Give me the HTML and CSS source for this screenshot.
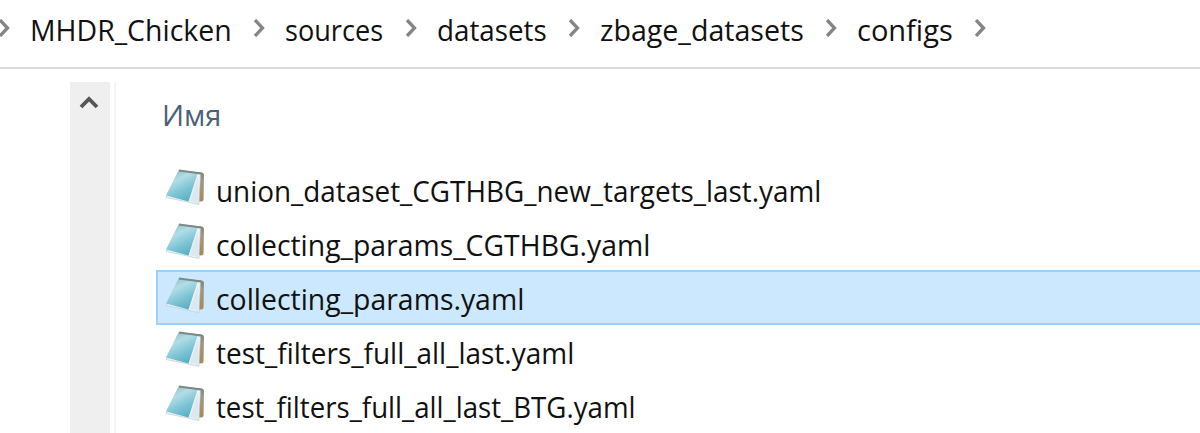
FILE: index.html
```html
<!DOCTYPE html>
<html lang="ru">
<head>
<meta charset="utf-8">
<title>configs</title>
<link rel="stylesheet" href="styles.css">
</head>
<body>
<svg class="defs" aria-hidden="true">
  <defs>
    <linearGradient id="cover" x1="0.2" y1="0" x2="0.7" y2="1">
      <stop offset="0" stop-color="#8fb9c4"/><stop offset="0.3" stop-color="#b2dde6"/>
      <stop offset="0.65" stop-color="#7cc4d5"/><stop offset="1" stop-color="#55adc3"/>
    </linearGradient>
    <linearGradient id="back" x1="0" y1="0" x2="0" y2="1">
      <stop offset="0" stop-color="#78827c"/><stop offset="0.35" stop-color="#a09784"/><stop offset="1" stop-color="#a58a58"/>
    </linearGradient>
    <symbol id="notepad" viewBox="0 0 42 38">
      <path d="M13 2.500 36 4.500Q38 5 38 7L37.500 32Q37 33.500 34 33.500L28 30Z" fill="url(#back)"/>
      <path d="M13 3 34.500 6 33 36.300Q28 36 22 34L0 29.500Z" fill="#edf3f6" stroke="#b4c3c6" stroke-width=".6"/>
      <path d="M32 9 33 35.500 24 33Z" fill="#dce8ef"/>
      <path d="M12.500 2.500 31.500 6 22.500 33.500 0 27.500Z" fill="url(#cover)"/>
      <path d="M13 2.600 35 5.500" stroke="#7c8987" stroke-width="2"/>
    </symbol>
  </defs>
</svg>
<main class="window">
  <nav class="crumbs">
    <svg class="chev lead" viewBox="0 0 12 18"><path d="M2 1 9.500 9 2 17"/></svg>
    <span class="crumb c1"><span>MHDR_Chicken</span></span>
    <svg class="chev" viewBox="0 0 12 18"><path d="M2 1 9.500 9 2 17"/></svg>
    <span class="crumb c2"><span>sources</span></span>
    <svg class="chev" viewBox="0 0 12 18"><path d="M2 1 9.500 9 2 17"/></svg>
    <span class="crumb c3"><span>datasets</span></span>
    <svg class="chev" viewBox="0 0 12 18"><path d="M2 1 9.500 9 2 17"/></svg>
    <span class="crumb c4"><span>zbage_datasets</span></span>
    <svg class="chev" viewBox="0 0 12 18"><path d="M2 1 9.500 9 2 17"/></svg>
    <span class="crumb c5"><span>configs</span></span>
    <svg class="chev" viewBox="0 0 12 18"><path d="M2 1 9.500 9 2 17"/></svg>
  </nav>
  <div class="body">
    <div class="scrollbar"><svg class="up" viewBox="0 0 20 14"><path d="M2 12 10 4 18 12"/></svg></div>
    <section class="files">
      <header class="heading"><span>Имя</span></header>
      <div class="row"><svg class="icon"><use href="#notepad"/></svg><span class="name n1">union_dataset_CGTHBG_new_targets_last.yaml</span></div>
      <div class="row"><svg class="icon"><use href="#notepad"/></svg><span class="name n2">collecting_params_CGTHBG.yaml</span></div>
      <div class="row selected"><svg class="icon"><use href="#notepad"/></svg><span class="name n3">collecting_params.yaml</span></div>
      <div class="row"><svg class="icon"><use href="#notepad"/></svg><span class="name n4">test_filters_full_all_last.yaml</span></div>
      <div class="row"><svg class="icon"><use href="#notepad"/></svg><span class="name n5">test_filters_full_all_last_BTG.yaml</span></div>
    </section>
  </div>
</main>
</body>
</html>
```
FILE: styles.css
```css
* { box-sizing: border-box; }
body { margin: 0; background: #fff; font-family: "Open Sans", "Noto Sans", sans-serif; font-size: 29px; color: #111; }
.defs { position: absolute; width: 0; height: 0; }
.window { width: 1200px; height: 433px; overflow: hidden; display: flex; flex-direction: column; }
.crumbs { height: 69px; flex: none; display: flex; align-items: flex-start; border-bottom: 2px solid #dcdcdc; padding-top: 10px; line-height: 40px; }
.crumb { flex: none; white-space: nowrap; }
.crumb span { display: inline-block; transform-origin: 0 50%; }
.chev { flex: none; width: 12px; height: 18px; margin: 9px 20px 0 22px; fill: none; stroke: #858585; stroke-width: 3.3; }
.chev.lead { margin-left: -2px; }
.c1 { width: 201px; } .c2 { width: 98px; } .c3 { width: 109px; } .c4 { width: 203px; } .c5 { width: 95px; }
.c1 span { transform: scaleX(.98); }
.c2 span { transform: scaleX(.935); }
.c3 span { transform: scaleX(.957); }
.c4 span { transform: scaleX(.986); }
.body { flex: 1; display: flex; padding: 13px 0 0 70px; }
.scrollbar { width: 40px; background: #efefef; flex: none; padding: 13px 0 0 9px; }
.up { display: block; width: 20px; height: 14px; fill: none; stroke: #555; stroke-width: 3.8; }
.files { flex: 1; margin-left: 4px; border-left: 2px solid #f5f5f5; padding-left: 40px; }
.heading { height: 80px; padding: 13px 0 0 6px; line-height: 40px; color: #4c607a; }
.row { height: 54px; display: flex; align-items: flex-start; padding: 5px 0 0 9px; border: 1px solid transparent; border-right: 0; }
.selected { height: 55px; margin-bottom: -1px; background: #cce8ff; border: 2px solid #99d1ff; border-right: 0; padding: 4px 0 0 8px; }
.icon { width: 42px; height: 38px; flex: none; }
.name { white-space: nowrap; line-height: 45px; margin-left: 8px; transform-origin: 0 50%; }
.n1 { transform: scaleX(.961); }
.n2 { transform: scaleX(.978); }
.n3 { transform: scaleX(.979); }
.n4 { transform: scaleX(.965); }
.n5 { transform: scaleX(.954); }
```
